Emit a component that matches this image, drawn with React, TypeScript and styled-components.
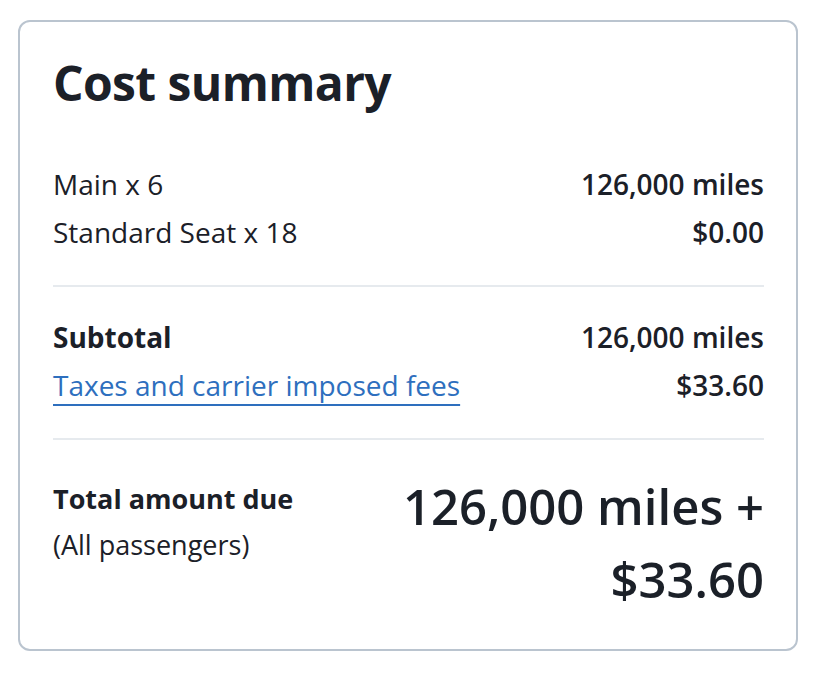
import React from "react";
import styled, { createGlobalStyle } from "styled-components";

const Global = createGlobalStyle`
  html, body { margin: 0; padding: 0; background: #ffffff; }
  body { font-family: "Open Sans", "Noto Sans", sans-serif; color: #1b2028; }
`;

const Page = styled.div`
  padding: 20px 18px 24px 18px;
`;

const Card = styled.section`
  border: 2px solid #bac4cf;
  border-radius: 12px;
  padding: 29px 32px 33px 33px;
  background: #fff;
`;

const Title = styled.h2`
  margin: 0 0 45px;
  font-size: 48px;
  line-height: 64px;
  font-weight: 700;
  letter-spacing: -0.6px;
`;

const Group = styled.div`
  display: flex;
  flex-direction: column;
`;

const Row = styled.div`
  display: flex;
  justify-content: space-between;
  align-items: baseline;
  font-size: 28px;
  line-height: 48px;
`;

const Label = styled.span<{ $bold?: boolean }>`
  font-weight: ${(p) => (p.$bold ? 700 : 400)};
`;

const Value = styled.span`
  font-weight: 600;
  text-align: right;
`;

const Link = styled.a`
  color: #2e6fbe;
  text-decoration: underline;
  text-decoration-thickness: 2px;
  text-underline-offset: 8px;
  cursor: pointer;
`;

const Divider = styled.hr`
  border: none;
  border-top: 2px solid #e6eaee;
  margin: 29px 0 26px;
`;

const TotalRow = styled.div`
  display: flex;
  justify-content: space-between;
  align-items: flex-start;
  padding-top: 4px;
`;

const TotalLabel = styled.div`
  display: flex;
  flex-direction: column;
  font-size: 27px;
  line-height: 46px;
  padding-top: 6px;
`;

const TotalValue = styled.div`
  font-size: 49px;
  line-height: 73px;
  font-weight: 600;
  text-align: right;
  max-width: 400px;
`;

export default function App() {
  return (
    <>
      <Global />
      <Page>
        <Card>
          <Title>Cost summary</Title>
          <Group>
            <Row>
              <Label>Main x 6</Label>
              <Value>126,000 miles</Value>
            </Row>
            <Row>
              <Label>Standard Seat x 18</Label>
              <Value>$0.00</Value>
            </Row>
          </Group>
          <Divider />
          <Group>
            <Row>
              <Label $bold>Subtotal</Label>
              <Value>126,000 miles</Value>
            </Row>
            <Row>
              <Link>Taxes and carrier imposed fees</Link>
              <Value>$33.60</Value>
            </Row>
          </Group>
          <Divider />
          <TotalRow>
            <TotalLabel>
              <Label $bold>Total amount due</Label>
              <Label>(All passengers)</Label>
            </TotalLabel>
            <TotalValue>126,000 miles + $33.60</TotalValue>
          </TotalRow>
        </Card>
      </Page>
    </>
  );
}
